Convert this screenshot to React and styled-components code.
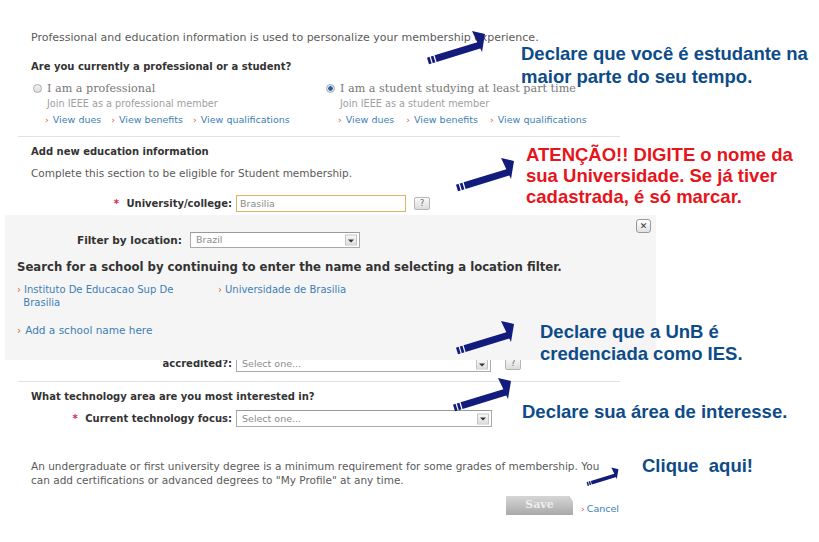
import React from 'react';
import styled, { createGlobalStyle } from 'styled-components';

const GlobalStyle = createGlobalStyle`
  body {
    margin: 0;
    background: #fff;
  }
`;

const Page = styled.div`
  position: relative;
  width: 819px;
  height: 542px;
  overflow: hidden;
  background: #fff;
  font-family: 'DejaVu Sans', Verdana, sans-serif;
  font-size: 10px;
  color: #555;
`;

const Form = styled.div`
  width: 602px;
  margin-left: 18px;
  padding-top: 31px;
`;

const Text = styled.div`
  padding-left: 13px;
  line-height: 14px;
  margin-top: ${(p) => p.$mt || 0}px;
  font-size: ${(p) => p.$size || (p.$bold ? 10 : 10.5)}px;
  color: ${(p) => (p.$bold ? '#333' : '#5a5a5a')};
  font-weight: ${(p) => (p.$bold ? 'bold' : 'normal')};
`;

const Divider = styled.div`
  height: 1px;
  background: #e2e2e2;
  margin-top: ${(p) => p.$mt || 0}px;
`;

const RadioGrid = styled.div`
  display: grid;
  grid-template-columns: 293px 1fr;
  padding-left: 13px;
  margin-top: 7px;
`;

const RadioCol = styled.div`
  display: flex;
  flex-direction: column;
`;

const RadioLabel = styled.label`
  display: flex;
  align-items: center;
  gap: 5px;
  height: 14px;
  padding-left: 2px;
  font-family: 'DejaVu Serif', Georgia, serif;
  font-size: 11.2px;
  color: #777;
`;

const RadioDot = styled.span`
  width: 9px;
  height: 9px;
  border-radius: 50%;
  box-sizing: border-box;
  border: 1px solid #aaa;
  background: ${(p) =>
    p.$checked
      ? 'radial-gradient(circle, #2a5d9c 0 2px, #dfe6ee 2.5px)'
      : 'linear-gradient(#f4f4f4, #ddd)'};
`;

const SubNote = styled.div`
  padding-left: 16px;
  margin-top: 2px;
  line-height: 14px;
  font-size: 9.7px;
  color: #a0a0a0;
`;

const LinkRow = styled.div`
  display: flex;
  gap: ${(p) => p.$gap || 10}px;
  padding-left: 14px;
  margin-top: 2px;
  line-height: 14px;
`;

const Link = styled.span`
  color: #3d80b5;
  font-size: ${(p) => p.$size || 9.5}px;
  &::before {
    content: '›';
    color: #e2622e;
    margin-right: 4px;
  }
`;

const FieldRow = styled.div`
  display: grid;
  grid-template-columns: 214px auto auto;
  justify-content: start;
  align-items: end;
  column-gap: 4px;
  margin-top: ${(p) => p.$mt || 0}px;
`;

const FieldLabel = styled.div`
  text-align: right;
  font-weight: bold;
  color: #333;
  line-height: 14px;
  padding-bottom: 1px;
  &::before {
    content: ${(p) => (p.$req ? "'* '" : "''")};
    color: #d2284a;
    margin-right: 4px;
  }
`;

const TextInput = styled.div`
  width: 170px;
  height: 17px;
  box-sizing: border-box;
  border: 1px solid #d9b46a;
  background: #fff;
  padding-left: 3px;
  line-height: 15px;
  font-size: 9.5px;
  color: #8a8a8a;
`;

const SelectBox = styled.div`
  position: relative;
  width: ${(p) => p.$w}px;
  height: ${(p) => p.$h || 16}px;
  box-sizing: border-box;
  border: 1px solid #aaa;
  border-top-color: #999;
  background: #fff;
  padding-left: 5px;
  line-height: ${(p) => (p.$h || 16) - 2}px;
  font-size: 9.5px;
  color: #8c8c8c;
`;

const SelectBtn = styled.span`
  position: absolute;
  right: 2px;
  top: 50%;
  transform: translateY(-50%);
  width: 12px;
  height: 11px;
  box-sizing: border-box;
  border: 1px solid #c4c4c4;
  background: linear-gradient(#f7f7f7, #dedede);
  display: flex;
  align-items: center;
  justify-content: center;
  &::after {
    content: '';
    border-left: 3px solid transparent;
    border-right: 3px solid transparent;
    border-top: 3px solid #333;
    margin-top: 1px;
  }
`;

const HelpBtn = styled.span`
  width: 16px;
  height: 13px;
  box-sizing: border-box;
  border: 1px solid #b5b5b5;
  border-radius: 2px;
  background: linear-gradient(#fafafa, #dcdcdc);
  color: #666;
  font-size: 8px;
  line-height: 11px;
  text-align: center;
  margin-left: ${(p) => p.$ml || 3}px;
  margin-bottom: 2px;
`;

const Actions = styled.div`
  display: flex;
  justify-content: flex-end;
  align-items: center;
  gap: 8px;
  margin-top: 9px;
`;

const SaveBtn = styled.div`
  width: 67px;
  height: 19px;
  background: linear-gradient(#d6d6d6, #a9a9a9);
  color: #eee;
  font-family: 'DejaVu Serif', Georgia, serif;
  font-weight: bold;
  font-size: 11px;
  line-height: 18px;
  text-align: center;
  clip-path: polygon(0 0, 95% 0, 100% 30%, 100% 100%, 0 100%);
`;

const CancelLink = styled(Link)`
  margin-top: 5px;
  margin-right: 1px;
  font-size: 9.5px;
  &::before {
    margin-right: 2px;
  }
`;

/* school search popup lying over the form */
const Panel = styled.div`
  position: absolute;
  left: 5px;
  top: 215px;
  width: 651px;
  height: 145px;
  background: #f5f5f5;
  box-sizing: border-box;
  padding: 17px 0 0 12px;
`;

const CloseBtn = styled.span`
  position: absolute;
  top: 4px;
  right: 5px;
  width: 15px;
  height: 14px;
  box-sizing: border-box;
  border: 1px solid #999;
  border-radius: 3px;
  background: linear-gradient(#fff, #e2e2e2);
  font-size: 9px;
  font-weight: bold;
  line-height: 12px;
  text-align: center;
  color: #333;
`;

const FilterRow = styled.div`
  display: flex;
  align-items: center;
  gap: 8px;
  padding-left: 60px;
`;

const FilterLabel = styled.span`
  font-weight: bold;
  font-size: 10.5px;
  color: #333;
`;

const SearchTitle = styled.div`
  margin-top: 12px;
  font-weight: bold;
  font-size: 11.7px;
  color: #333;
  line-height: 14px;
`;

const Results = styled.div`
  display: grid;
  grid-template-columns: 201px 200px;
  margin-top: 9px;
  line-height: 13px;
`;

const ResultLink = styled(Link)`
  font-size: 10px;
  &::before {
    margin-right: 3px;
  }
`;

const AddSchool = styled.div`
  margin-top: 14px;
  line-height: 14px;
`;

/* annotations drawn over the screenshot */
const Note = styled.div`
  position: absolute;
  left: ${(p) => p.$x}px;
  top: ${(p) => p.$y}px;
  font-family: 'Liberation Sans', Arial, sans-serif;
  font-weight: bold;
  font-size: ${(p) => p.$size || 18.5}px;
  line-height: ${(p) => p.$lh || 22}px;
  color: ${(p) => (p.$red ? '#e8141b' : '#0d4c88')};
  white-space: nowrap;
`;

const ArrowSvg = styled.svg`
  position: absolute;
  left: ${(p) => p.$x}px;
  top: ${(p) => p.$y}px;
  overflow: visible;
`;

const NAVY = '#111c7c';

const Arrow = ({ x, y, s = 1 }) => (
  <ArrowSvg $x={x} $y={y} width={60 * s} height={34 * s} viewBox="0 0 60 34">
    <g stroke={NAVY} strokeWidth="7">
      <line x1="2" y1="31" x2="4.6" y2="30.2" />
      <line x1="5.8" y1="29.8" x2="8.4" y2="29" />
      <line x1="9.6" y1="28.6" x2="54" y2="15" />
    </g>
    <polygon points="46,1 59,4 56,22" fill={NAVY} />
  </ArrowSvg>
);

const App = () => (
  <Page>
    <GlobalStyle />
    <Form>
      <Text $size={11}>
        Professional and education information is used to personalize your membership experience.
      </Text>
      <Text $bold $mt={15}>Are you currently a professional or a student?</Text>
      <RadioGrid>
        <RadioCol>
          <RadioLabel>
            <RadioDot />I am a professional
          </RadioLabel>
          <SubNote>Join IEEE as a professional member</SubNote>
          <LinkRow>
            <Link>View dues</Link>
            <Link>View benefits</Link>
            <Link>View qualifications</Link>
          </LinkRow>
        </RadioCol>
        <RadioCol>
          <RadioLabel>
            <RadioDot $checked />I am a student studying at least part time
          </RadioLabel>
          <SubNote>Join IEEE as a student member</SubNote>
          <LinkRow $gap={12}>
            <Link>View dues</Link>
            <Link>View benefits</Link>
            <Link>View qualifications</Link>
          </LinkRow>
        </RadioCol>
      </RadioGrid>
      <Divider $mt={9} />
      <Text $bold $mt={8}>Add new education information</Text>
      <Text $mt={7}>Complete this section to be eligible for Student membership.</Text>
      <FieldRow $mt={15}>
        <FieldLabel $req>University/college:</FieldLabel>
        <TextInput>Brasilia</TextInput>
        <HelpBtn $ml={4}>?</HelpBtn>
      </FieldRow>
      <FieldRow $mt={131}>
        <FieldLabel>
          Is this school
          <br />
          accredited?:
        </FieldLabel>
        <SelectBox $w={255}>
          Select one...
          <SelectBtn />
        </SelectBox>
        <HelpBtn $ml={10}>?</HelpBtn>
      </FieldRow>
      <Divider $mt={9} />
      <Text $bold $mt={8}>What technology area are you most interested in?</Text>
      <FieldRow $mt={6}>
        <FieldLabel $req>Current technology focus:</FieldLabel>
        <SelectBox $w={256} $h={17}>
          Select one...
          <SelectBtn />
        </SelectBox>
      </FieldRow>
      <Text $mt={32}>
        An undergraduate or first university degree is a minimum requirement for some grades of membership. You
        <br />
        can add certifications or advanced degrees to "My Profile" at any time.
      </Text>
      <Actions>
        <SaveBtn>Save</SaveBtn>
        <CancelLink>Cancel</CancelLink>
      </Actions>
    </Form>

    <Panel>
      <CloseBtn>✕</CloseBtn>
      <FilterRow>
        <FilterLabel>Filter by location:</FilterLabel>
        <SelectBox $w={170}>
          Brazil
          <SelectBtn />
        </SelectBox>
      </FilterRow>
      <SearchTitle>
        Search for a school by continuing to enter the name and selecting a location filter.
      </SearchTitle>
      <Results>
        <ResultLink>
          Instituto De Educacao Sup De
          <br />
          &nbsp;&nbsp;Brasilia
        </ResultLink>
        <ResultLink>Universidade de Brasilia</ResultLink>
      </Results>
      <AddSchool>
        <Link $size={10.5}>Add a school name here</Link>
      </AddSchool>
    </Panel>

    <Arrow x={426} y={30} />
    <Note $x={521} $y={42} $lh={23}>
      Declare que você é estudante na
      <br />
      maior parte do seu tempo.
    </Note>

    <Arrow x={455} y={157} />
    <Note $x={526} $y={144} $red $lh={21}>
      ATENÇÃO!! DIGITE o nome da
      <br />
      sua Universidade. Se já tiver
      <br />
      cadastrada, é só marcar.
    </Note>

    <Arrow x={455} y={320} />
    <Note $x={540} $y={321}>
      Declare que a UnB é
      <br />
      credenciada como IES.
    </Note>

    <Arrow x={452} y={377} />
    <Note $x={522} $y={401}>Declare sua área de interesse.</Note>

    <Arrow x={586} y={467} s={0.55} />
    <Note $x={642} $y={455}>Clique&nbsp; aqui!</Note>
  </Page>
);

export default App;
